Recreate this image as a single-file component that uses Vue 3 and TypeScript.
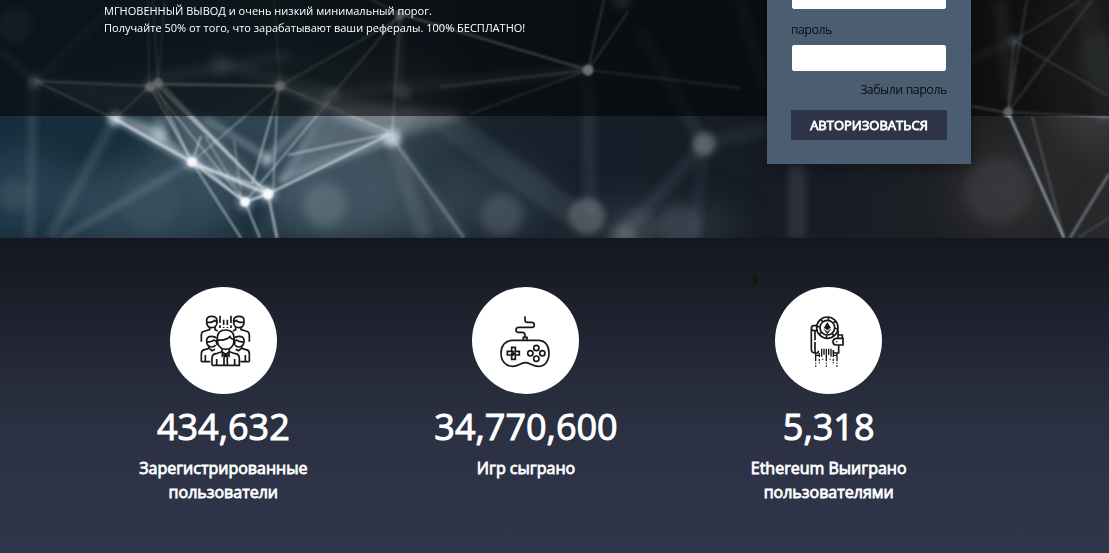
<script setup lang="ts">
import { ref } from 'vue'

type Line = [number, number, number, number, number, number]
type Dot = [number, number, number, number]
type Haze = [number, number, number, number, string, number]

const login = ref('')
const password = ref('')

const stats = [
  { icon: 'users', value: '434,632', label: 'Зарегистрированные пользователи' },
  { icon: 'gamepad', value: '34,770,600', label: 'Игр сыграно' },
  { icon: 'wallet', value: '5,318', label: 'Ethereum Выиграно пользователями' },
]

// cx, cy, rx, ry, colour, opacity
const haze: Haze[] = [
  [150, 205, 90, 45, '#4b6575', 0.45],
  [20, 190, 50, 40, '#3b5666', 0.45],
  [240, 150, 90, 50, '#5d7886', 0.3],
  [340, 190, 70, 50, '#5d7886', 0.4],
  [420, 190, 60, 50, '#3f5662', 0.35],
  [380, 125, 90, 26, '#8a9ba6', 0.2],
  [490, 200, 60, 40, '#44525e', 0.4],
  [650, 225, 90, 25, '#3c4550', 0.5],
  [1000, 190, 50, 40, '#48484c', 0.3],
  [1090, 60, 50, 90, '#55575a', 0.35],
  [300, 80, 160, 30, '#70777c', 0.2],
  [100, 90, 90, 14, '#6d7880', 0.2],
]

// x1, y1, x2, y2, stroke width, opacity
const sharpLines: Line[] = [
  [35, 81, 150, 86, 1.8, 0.5],
  [35, 81, 115, 119, 1.8, 0.5],
  [115, 119, 150, 86, 1.6, 0.45],
  [155, 84, 280, 86, 2.4, 0.65],
  [148, 0, 149, 86, 1.6, 0.25],
  [153, 0, 158, 83, 1.6, 0.3],
  [165, 0, 158, 83, 1.4, 0.3],
  [280, 86, 274, 0, 1.4, 0.25],
  [280, 86, 400, 18, 1.6, 0.4],
  [280, 86, 390, 132, 1.6, 0.5],
  [333, 94, 400, 14, 2, 0.35],
  [400, 14, 588, 70, 2, 0.6],
  [400, 14, 392, 136, 1.8, 0.4],
  [400, 14, 372, 0, 1.6, 0.4],
  [588, 70, 604, 0, 1.8, 0.45],
  [588, 70, 628, 12, 2, 0.35],
  [588, 70, 740, 88, 2, 0.25],
  [588, 70, 440, 87, 2.4, 0.3],
  [588, 70, 470, 114, 2, 0.25],
  [115, 119, 192, 162, 3, 0.8],
  [150, 86, 192, 162, 1.6, 0.7],
  [156, 86, 192, 162, 1.6, 0.6],
  [152, 86, 245, 202, 1.3, 0.6],
  [156, 84, 268, 194, 1.8, 0.75],
  [162, 84, 268, 194, 1.6, 0.65],
  [159, 84, 235, 160, 1.4, 0.5],
  [205, 136, 245, 202, 1.4, 0.5],
  [280, 86, 192, 162, 1.5, 0.5],
  [280, 86, 252, 184, 1.7, 0.65],
  [278, 86, 273, 194, 1.6, 0.55],
  [234, 140, 242, 200, 1.4, 0.45],
  [192, 162, 245, 202, 2.2, 0.85],
  [196, 160, 245, 202, 1.4, 0.6],
  [192, 162, 268, 194, 2.6, 0.85],
  [192, 165, 268, 188, 1.4, 0.6],
  [245, 202, 268, 194, 2.4, 0.85],
  [245, 202, 330, 100, 2, 0.5],
  [268, 194, 390, 134, 2, 0.8],
  [288, 155, 388, 134, 1.8, 0.55],
  [192, 162, 241, 238, 1.8, 0.65],
  [245, 202, 260, 238, 2, 0.6],
  [268, 194, 277, 238, 2.6, 0.65],
  [194, 157, 201, 136, 2, 0.6],
  [392, 138, 464, 238, 3, 0.25],
  [1008, 112, 1027, 0, 1.8, 0.4],
  [1008, 112, 1092, 0, 2, 0.4],
  [1014, 41, 1080, 0, 2, 0.35],
  [1014, 41, 1109, 96, 1.8, 0.4],
  [1014, 41, 1008, 112, 3, 0.3],
  [971, 106, 1008, 113, 2, 0.5],
  [1008, 112, 1109, 117, 1.6, 0.5],
  [1008, 112, 1064, 238, 2.2, 0.65],
  [1032, 116, 1064, 238, 2, 0.22],
  [1070, 238, 1109, 174, 3, 0.35],
  [1078, 238, 1109, 218, 2, 0.18],
]

const softLines: Line[] = [
  [0, 50, 35, 81, 6, 0.16],
  [35, 81, 110, 10, 5, 0.13],
  [33, 81, 30, 238, 10, 0.12],
  [115, 119, 50, 238, 10, 0.14],
  [192, 162, 62, 238, 6, 0.22],
  [150, 80, 290, 55, 12, 0.14],
  [220, 65, 333, 92, 12, 0.14],
  [160, 118, 160, 140, 14, 0.3],
  [268, 158, 205, 118, 6, 0.4],
  [268, 158, 330, 95, 8, 0.35],
  [280, 185, 330, 100, 6, 0.3],
  [280, 180, 392, 138, 8, 0.35],
  [280, 86, 392, 138, 7, 0.3],
  [192, 162, 268, 194, 8, 0.45],
  [115, 119, 192, 162, 7, 0.5],
  [300, 97, 590, 70, 12, 0.12],
  [392, 138, 425, 238, 16, 0.12],
  [392, 138, 464, 238, 8, 0.14],
  [440, 118, 575, 215, 26, 0.09],
  [588, 80, 590, 215, 14, 0.08],
  [640, 30, 704, 144, 14, 0.07],
  [704, 144, 620, 238, 14, 0.08],
  [704, 144, 694, 238, 12, 0.06],
  [704, 144, 767, 128, 16, 0.06],
  [797, 164, 797, 238, 18, 0.12],
  [740, 0, 765, 90, 12, 0.07],
  [1000, 0, 1010, 100, 14, 0.14],
  [971, 60, 1014, 41, 6, 0.18],
  [1085, 0, 1109, 120, 24, 0.1],
  [400, 14, 398, 95, 8, 0.2],
]

// cx, cy, radius, opacity
const glowDots: Dot[] = [
  [35, 82, 6, 0.6],
  [160, 135, 8, 0.45],
  [267, 160, 6, 0.7],
  [392, 138, 9, 0.85],
  [115, 118, 7, 0.9],
  [704, 144, 12, 0.3],
  [587, 216, 18, 0.25],
  [333, 94, 7, 0.32],
  [403, 93, 8, 0.32],
  [1014, 41, 5, 0.6],
  [192, 162, 8, 0.5],
  [245, 202, 8, 0.5],
  [268, 194, 9, 0.5],
  [150, 86, 7, 0.4],
  [280, 86, 7, 0.35],
]

const blurDots: Dot[] = [
  [220, 65, 10, 0.3],
  [15, 195, 16, 0.1],
  [150, 202, 30, 0.06],
  [325, 205, 22, 0.2],
  [502, 215, 21, 0.18],
  [623, 238, 14, 0.22],
  [637, 228, 20, 0.1],
  [680, 226, 22, 0.12],
  [997, 190, 34, 0.07],
  [1105, 60, 28, 0.14],
  [622, 0, 9, 0.3],
  [15, 25, 18, 0.12],
]

const sharpDots: Dot[] = [
  [150, 87, 5, 0.75],
  [158, 83, 5, 0.75],
  [280, 86, 5, 0.7],
  [400, 15, 5, 0.5],
  [588, 70, 5.5, 0.95],
  [192, 162, 5, 1],
  [245, 202, 5, 1],
  [268, 194, 5.5, 1],
  [1008, 112, 5, 0.75],
]
</script>

<template>
  <main class="page">
    <section class="hero">
      <svg class="network" viewBox="0 0 1109 238" preserveAspectRatio="xMidYMid slice" aria-hidden="true">
        <defs>
          <linearGradient id="sky" x1="0" y1="0" x2="1" y2="0">
            <stop offset="0" stop-color="#152d3d" />
            <stop offset="0.25" stop-color="#1a2e3a" />
            <stop offset="0.42" stop-color="#18242e" />
            <stop offset="0.6" stop-color="#151d27" />
            <stop offset="0.75" stop-color="#181c25" />
            <stop offset="0.88" stop-color="#202224" />
            <stop offset="1" stop-color="#28292b" />
          </linearGradient>
          <filter id="mist" x="-20%" y="-30%" width="140%" height="160%" color-interpolation-filters="sRGB"><feGaussianBlur stdDeviation="16" /></filter>
          <filter id="blurry" x="-20%" y="-20%" width="140%" height="140%"><feGaussianBlur stdDeviation="5" /></filter>
          <filter id="soft" x="-20%" y="-20%" width="140%" height="140%"><feGaussianBlur stdDeviation="3" /></filter>
          <filter id="crisp" x="-5%" y="-5%" width="110%" height="110%"><feGaussianBlur stdDeviation="0.8" /></filter>
        </defs>
        <rect width="1109" height="238" fill="url(#sky)" />
        <g filter="url(#mist)">
          <ellipse v-for="(h, i) in haze" :key="i" :cx="h[0]" :cy="h[1]" :rx="h[2]" :ry="h[3]" :fill="h[4]" :opacity="h[5]" />
        </g>
        <g filter="url(#blurry)" fill="#b9c4cb">
          <path d="M35 81 150 87 190 160 115 119Z" opacity=".12" />
          <path d="M155 86 192 160 266 194 215 128Z" opacity=".22" />
          <path d="M280 180 392 142 470 114 330 100Z" opacity=".24" />
          <path d="M320 118 350 104 425 108 392 140Z" opacity=".2" />
          <path d="M280 86 333 94 460 115 390 138Z" opacity=".16" />
          <path d="M280 190 250 238 460 238 392 140Z" opacity=".08" />
          <circle v-for="(d, i) in blurDots" :key="i" :cx="d[0]" :cy="d[1]" :r="d[2]" :opacity="d[3]" />
        </g>
        <g filter="url(#soft)" stroke="#bdcbd4" fill="#c6d6df">
          <path d="M115 114 155 126 194 162Z" stroke="none" opacity=".5" />
          <line v-for="(l, i) in softLines" :key="i" :x1="l[0]" :y1="l[1]" :x2="l[2]" :y2="l[3]" :stroke-width="l[4]" :opacity="l[5]" />
          <circle v-for="(d, i) in glowDots" :key="'d' + i" :cx="d[0]" :cy="d[1]" :r="d[2]" :opacity="d[3]" stroke="none" />
        </g>
        <g filter="url(#crisp)" stroke="#d8e2e8" fill="#f4f8fa">
          <line v-for="(l, i) in sharpLines" :key="i" :x1="l[0]" :y1="l[1]" :x2="l[2]" :y2="l[3]" :stroke-width="l[4]" :opacity="l[5]" />
          <circle v-for="(d, i) in sharpDots" :key="'d' + i" :cx="d[0]" :cy="d[1]" :r="d[2]" :opacity="d[3]" stroke="none" />
        </g>
      </svg>

      <div class="band">
        <p class="intro">
          МГНОВЕННЫЙ ВЫВОД и очень низкий минимальный порог.<br />
          Получайте 50% от того, что зарабатывают ваши рефералы. 100% БЕСПЛАТНО!
        </p>
        <form class="card" @submit.prevent>
          <input v-model="login" class="field" type="text" aria-label="логин" />
          <label class="label" for="password">пароль</label>
          <input id="password" v-model="password" class="field" type="password" />
          <a class="forgot" href="#">Забыли пароль</a>
          <button class="submit" type="submit">АВТОРИЗОВАТЬСЯ</button>
        </form>
      </div>
    </section>

    <section class="stats">
      <article v-for="s in stats" :key="s.icon" class="stat" :class="s.icon">
        <div class="disc">
          <svg v-if="s.icon === 'users'" class="icon" viewBox="15 20 321 321" aria-hidden="true">
            <g v-for="side in ['', 'translate(362 0) scale(-1 1)']" :key="side" :transform="side || undefined">
              <path d="M109 184V164Q109 154 120 152L134 148V140M150 140V148L158 152" />
              <path d="M125 125V120Q125 108 140 108T156 120V128Q154 142 140 142T125 127ZM125 126Q143 127 149 120L156 126" />
              <path d="M109 244V220Q109 210 119 208L132 204V197" />
              <path d="M125 184V180Q125 168 140 168Q150 168 155 174M125 184Q126 199 140 200Q148 200 152 194M125 184Q142 186 147 179L155 184" />
              <path d="M109 244H136M121 224V244M134 205 141 211 150 207" />
            </g>
            <path d="M165 106V128M165 135V143M176 118V134M176 140V143M187 118V134M187 140V143M198 106V128M198 135V143" />
            <path d="M157 178V171Q158 149 182 149T207 171V178Q207 206 182 207Q158 206 157 178ZM158 179Q184 181 195 169Q198 177 206 178" />
            <path d="M157 176Q152 190 158 194M207 176Q212 190 206 194" />
            <path d="M141 255V233Q141 222 153 220L171 214V205M193 205V214L211 220Q223 222 223 233V255H141M155 236V255M209 236V255" />
            <path d="M171 214 182 222 193 214M172 214V227L182 221 192 227V214M182 224 177 232V255M182 224 187 232V255" />
          </svg>
          <svg v-else-if="s.icon === 'gamepad'" class="icon" viewBox="19 18 321 321" aria-hidden="true">
            <path d="M178 106V116Q178 124 186 124H199Q206 125 206 132T199 139H158Q151 140 151 147T158 154H171Q178 155 178 163V169M173 178V169H184V178" />
            <path d="M140 178H218C240 178 250 196 250 216C250 240 238 256 218 256C200 256 195 245 179 245S159 256 141 256C119 256 106 239 106 216C106 195 119 178 140 178Z" />
            <path d="M138 199H149V211H161V222H149V235H138V222H125V211H138ZM143 209V224M136 217H151" />
            <circle cx="212" cy="201" r="8" />
            <circle cx="194" cy="217" r="8" />
            <circle cx="230" cy="217" r="8" />
            <circle cx="212" cy="233" r="8" />
          </svg>
          <svg v-else class="icon" viewBox="108 65 321 321" aria-hidden="true">
            <circle cx="265" cy="187" r="32" />
            <circle cx="265" cy="187" r="22" />
            <circle cx="265" cy="187" r="27" stroke-width="8" stroke-dasharray="5 16.2" />
            <path d="M265 171 275 187 265 194 255 187ZM254 191 265 199 276 191 265 206Z" fill="#171717" stroke-width="1" />
            <path d="M232 181H223Q217 182 217 190V254Q218 262 226 263H239M217 188Q218 196 226 196H234M228 197V225M228 230V263M238 256V262" />
            <path d="M297 195V218M297 209H310V220M292 219H312V239H292Q282 238 282 229T292 219ZM293 228V231M299 240V263H283V254" />
            <path d="M230 264V288M294 264V288M241 264V276M283 264V276M230 270H241M283 270H294" stroke-width="4" />
            <path d="M248 250V274M255 250V268M262 250V288M269 250V268M276 250V274" stroke-width="4" />
            <path d="M230 292V295M230 300V304M241 281V287M241 291V294M251 280V283M262 292V295M262 300V304M273 280V283M283 281V287M283 291V294M294 292V295M294 300V304" stroke-width="4" />
          </svg>
        </div>
        <strong class="value">{{ s.value }}</strong>
        <h2 class="caption">{{ s.label }}</h2>
      </article>
    </section>
  </main>
</template>

<style>
body {
  margin: 0;
  background: #303549;
}
</style>

<style scoped>
.page {
  min-height: 100vh;
  overflow: hidden;
  display: flex;
  flex-direction: column;
  box-sizing: border-box;
  font-family: 'Open Sans', 'Noto Sans', sans-serif;
  color: #fff;
}

.hero {
  position: relative;
  padding-bottom: 122px;
  background: #17232d;
}

.network {
  position: absolute;
  inset: 0;
  width: 100%;
  height: 100%;
}

.band {
  position: relative;
  display: flex;
  justify-content: space-between;
  align-items: flex-start;
  padding: 0 138px 0 104px;
  background: rgba(0, 0, 0, 0.54);
}

.intro {
  margin: 2px 0 0;
  font-size: 11px;
  font-weight: 500;
  line-height: 17px;
}

.card {
  display: flex;
  flex-direction: column;
  box-sizing: border-box;
  width: 204px;
  margin: -17px 0 -48px;
  padding: 0 24px 24px;
  background: #4b5d71;
  box-shadow: 0 4px 16px rgba(0, 0, 0, 0.35);
  color: #000;
}

.field {
  box-sizing: border-box;
  height: 26px;
  margin: 0 1px;
  padding: 0 6px;
  border: 1px solid #fff;
  border-radius: 2px;
  background: #fff;
  font: inherit;
  font-size: 12px;
}

.label,
.forgot {
  font-size: 12px;
  font-weight: 300;
  line-height: 16px;
  -webkit-text-stroke: 0.2px #000;
}

.label {
  margin: 13px 0 7px;
}

.forgot {
  align-self: flex-end;
  margin: 11px 0 12px;
  color: inherit;
  text-decoration: none;
}

.submit {
  height: 30px;
  padding: 0;
  border: 0;
  background: #2e3549;
  color: #fff;
  font: inherit;
  font-size: 13px;
  -webkit-text-stroke: 0.8px #fff;
  cursor: pointer;
}

.stats {
  flex: 1;
  display: grid;
  grid-template-columns: repeat(3, 1fr);
  align-items: start;
  padding: 49px 129px 48px 72px;
  background: linear-gradient(#14171e 0%, #1f2330 27%, #2a2f40 55%, #2e3448 80%, #303549 100%);
}

.stat {
  position: relative;
  display: flex;
  flex-direction: column;
  align-items: center;
  text-align: center;
}

.wallet::before {
  content: '';
  position: absolute;
  top: -13px;
  left: 76px;
  width: 4px;
  height: 11px;
  border-radius: 1px;
  background: #111a08;
}

.disc {
  width: 107px;
  height: 107px;
  border-radius: 50%;
  background: #fff;
}

.icon {
  display: block;
  width: 100%;
  height: 100%;
  fill: none;
  stroke: #171717;
  stroke-width: 5;
}

.value {
  margin-top: 13px;
  font-size: 36px;
  font-weight: 400;
  line-height: 40px;
  -webkit-text-stroke: 1px #fff;
}

.caption {
  max-width: 200px;
  margin: 9px 0 0;
  font-size: 16px;
  font-weight: 400;
  line-height: 24px;
  -webkit-text-stroke: 0.8px #fff;
}
</style>
